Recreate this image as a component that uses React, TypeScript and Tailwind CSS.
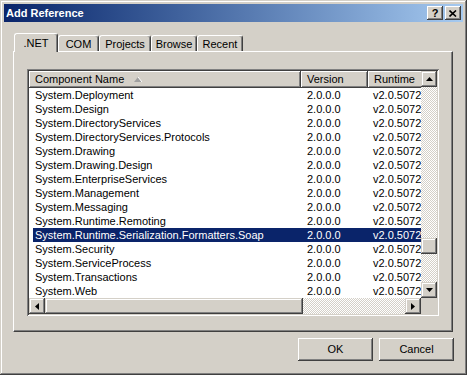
import React from "react";

const rows = [
  "System.Deployment",
  "System.Design",
  "System.DirectoryServices",
  "System.DirectoryServices.Protocols",
  "System.Drawing",
  "System.Drawing.Design",
  "System.EnterpriseServices",
  "System.Management",
  "System.Messaging",
  "System.Runtime.Remoting",
  "System.Runtime.Serialization.Formatters.Soap",
  "System.Security",
  "System.ServiceProcess",
  "System.Transactions",
  "System.Web",
];

const raised =
  "bg-[#d4d0c8] shadow-[inset_-1px_-1px_0_#404040,inset_1px_1px_0_#d4d0c8,inset_-2px_-2px_0_#808080,inset_2px_2px_0_#ffffff]";
const btnRaised =
  "bg-[#d4d0c8] shadow-[inset_-1px_-1px_0_#404040,inset_1px_1px_0_#ffffff,inset_-2px_-2px_0_#808080]";
const checker =
  "bg-[repeating-conic-gradient(#ffffff_0%_25%,#d4d0c8_0%_50%)] bg-[length:2px_2px]";

function Arrow({ dir }: { dir: "up" | "down" | "left" | "right" }) {
  const pts: Record<string, string> = {
    up: "3.5,0 7,4 0,4",
    down: "0,0 7,0 3.5,4",
    left: "4,0 4,7 0,3.5",
    right: "0,0 4,3.5 0,7",
  };
  const vert = dir === "up" || dir === "down";
  return (
    <svg width={vert ? 7 : 4} height={vert ? 4 : 7} viewBox={vert ? "0 0 7 4" : "0 0 4 7"}>
      <polygon points={pts[dir]} fill="#000" />
    </svg>
  );
}

function ScrollBtn({ dir }: { dir: "up" | "down" | "left" | "right" }) {
  return (
    <div className={`w-[16px] h-[16px] shrink-0 flex items-center justify-center ${raised}`}>
      <Arrow dir={dir} />
    </div>
  );
}

function Tab({ label, w, selected }: { label: string; w: string; selected?: boolean }) {
  return (
    <div
      className={`${w} ${
        selected ? "h-[19px] mb-[-1px] z-10 pt-[3px]" : "h-[16px] pt-[2px]"
      } relative flex justify-center bg-[#d4d0c8] rounded-t-[3px] border-t border-l border-t-white border-l-white border-r border-r-[#404040] shadow-[inset_-1px_0_0_#808080] text-[11px] leading-[13px] text-black`}
    >
      {label}
    </div>
  );
}

export default function App() {
  return (
    <div className="w-[467px] h-[375px] bg-[#d4d0c8] p-[4px] flex flex-col font-['Liberation_Sans',Arial,sans-serif] shadow-[inset_-1px_-1px_0_#404040,inset_1px_1px_0_#d4d0c8,inset_-2px_-2px_0_#808080,inset_2px_2px_0_#ffffff]">
      {/* Title bar */}
      <div className="h-[18px] shrink-0 flex items-center bg-linear-to-r from-[#0a246a] to-[#a6caf0] pl-[2px] pr-[2px]">
        <span className="text-white font-bold text-[11px] leading-[13px]">Add Reference</span>
        <div className="ml-auto flex gap-[2px]">
          <div className={`w-[16px] h-[14px] flex items-center justify-center ${btnRaised}`}>
            <span className="text-[11px] font-bold leading-[11px] text-black">?</span>
          </div>
          <div className={`w-[16px] h-[14px] flex items-center justify-center ${btnRaised}`}>
            <svg width="8" height="7" viewBox="0 0 8 7">
              <path d="M0.5 0.5 L7 6.5 M7 0.5 L0.5 6.5" stroke="#000" strokeWidth="1.6" />
            </svg>
          </div>
        </div>
      </div>

      {/* Body */}
      <div className="pt-[11px] pl-[9px] pr-[11px] flex flex-col">
        {/* Tabs */}
        <div className="flex items-end h-[18px] pl-[1px]">
          <Tab label=".NET" w="w-[44px]" selected />
          <Tab label="COM" w="w-[41px]" />
          <Tab label="Projects" w="w-[52px]" />
          <Tab label="Browse" w="w-[46px]" />
          <Tab label="Recent" w="w-[46px]" />
        </div>

        {/* Panel */}
        <div className="w-[440px] h-[281px] border-t border-l border-t-white border-l-white border-r border-b border-r-[#404040] border-b-[#404040] shadow-[inset_-1px_-1px_0_#808080] pl-[13px] pt-[17px]">
          {/* List view */}
          <div className="w-[412px] h-[247px] p-[2px] bg-white flex shadow-[inset_1px_1px_0_#808080,inset_-1px_-1px_0_#ffffff,inset_2px_2px_0_#404040,inset_-2px_-2px_0_#d4d0c8]">
            <div className="w-[392px] flex flex-col">
              <div className="h-[227px] overflow-hidden flex flex-col">
                {/* Header */}
                <div className="h-[17px] shrink-0 flex text-[11px] leading-[13px] text-black">
                  <div className={`w-[272px] shrink-0 flex items-center pl-[6px] ${btnRaised}`}>
                    <span>Component Name</span>
                    <svg className="ml-[10px]" width="8" height="5" viewBox="0 0 8 5">
                      <polygon points="4,0 8,5 0,5" fill="#a0a0a0" />
                      <line x1="4" y1="0" x2="8" y2="5" stroke="#ffffff" strokeWidth="1" />
                    </svg>
                  </div>
                  <div className={`w-[67px] shrink-0 flex items-center pl-[6px] ${btnRaised}`}>
                    Version
                  </div>
                  <div className={`w-[80px] shrink-0 flex items-center pl-[6px] ${btnRaised}`}>
                    Runtime
                  </div>
                </div>
                {/* Rows */}
                <div className="flex flex-col pl-[4px]">
                  {rows.map((r, i) => {
                    const sel = i === 10;
                    return (
                      <div
                        key={r}
                        className={`h-[14px] flex text-[11px] leading-[14px] whitespace-nowrap ${
                          sel ? "bg-[#0a246a] text-white" : "text-black"
                        }`}
                      >
                        <div className="w-[268px] shrink-0 pl-[2px] overflow-hidden">{r}</div>
                        <div className="w-[67px] shrink-0 pl-[6px]">2.0.0.0</div>
                        <div className="w-[60px] shrink-0 pl-[5px]">v2.0.50727</div>
                      </div>
                    );
                  })}
                </div>
              </div>
              {/* Horizontal scrollbar */}
              <div className="h-[16px] flex">
                <ScrollBtn dir="left" />
                <div className={`w-[258px] h-[16px] ${raised}`} />
                <div className={`flex-1 h-[16px] ${checker}`} />
                <ScrollBtn dir="right" />
              </div>
            </div>
            {/* Vertical scrollbar */}
            <div className="w-[16px] flex flex-col">
              <ScrollBtn dir="up" />
              <div className={`h-[151px] ${checker}`} />
              <div className={`h-[16px] ${raised}`} />
              <div className={`h-[28px] ${checker}`} />
              <ScrollBtn dir="down" />
              <div className="h-[16px] bg-[#d4d0c8]" />
            </div>
          </div>
        </div>

        {/* Buttons */}
        <div className="flex justify-end gap-[6px] mt-[6px] mr-[-2px]">
          <div className={`w-[75px] h-[23px] flex items-center justify-center text-[11px] text-black ${btnRaised}`}>
            OK
          </div>
          <div className={`w-[75px] h-[23px] flex items-center justify-center text-[11px] text-black ${btnRaised}`}>
            Cancel
          </div>
        </div>
      </div>
    </div>
  );
}
